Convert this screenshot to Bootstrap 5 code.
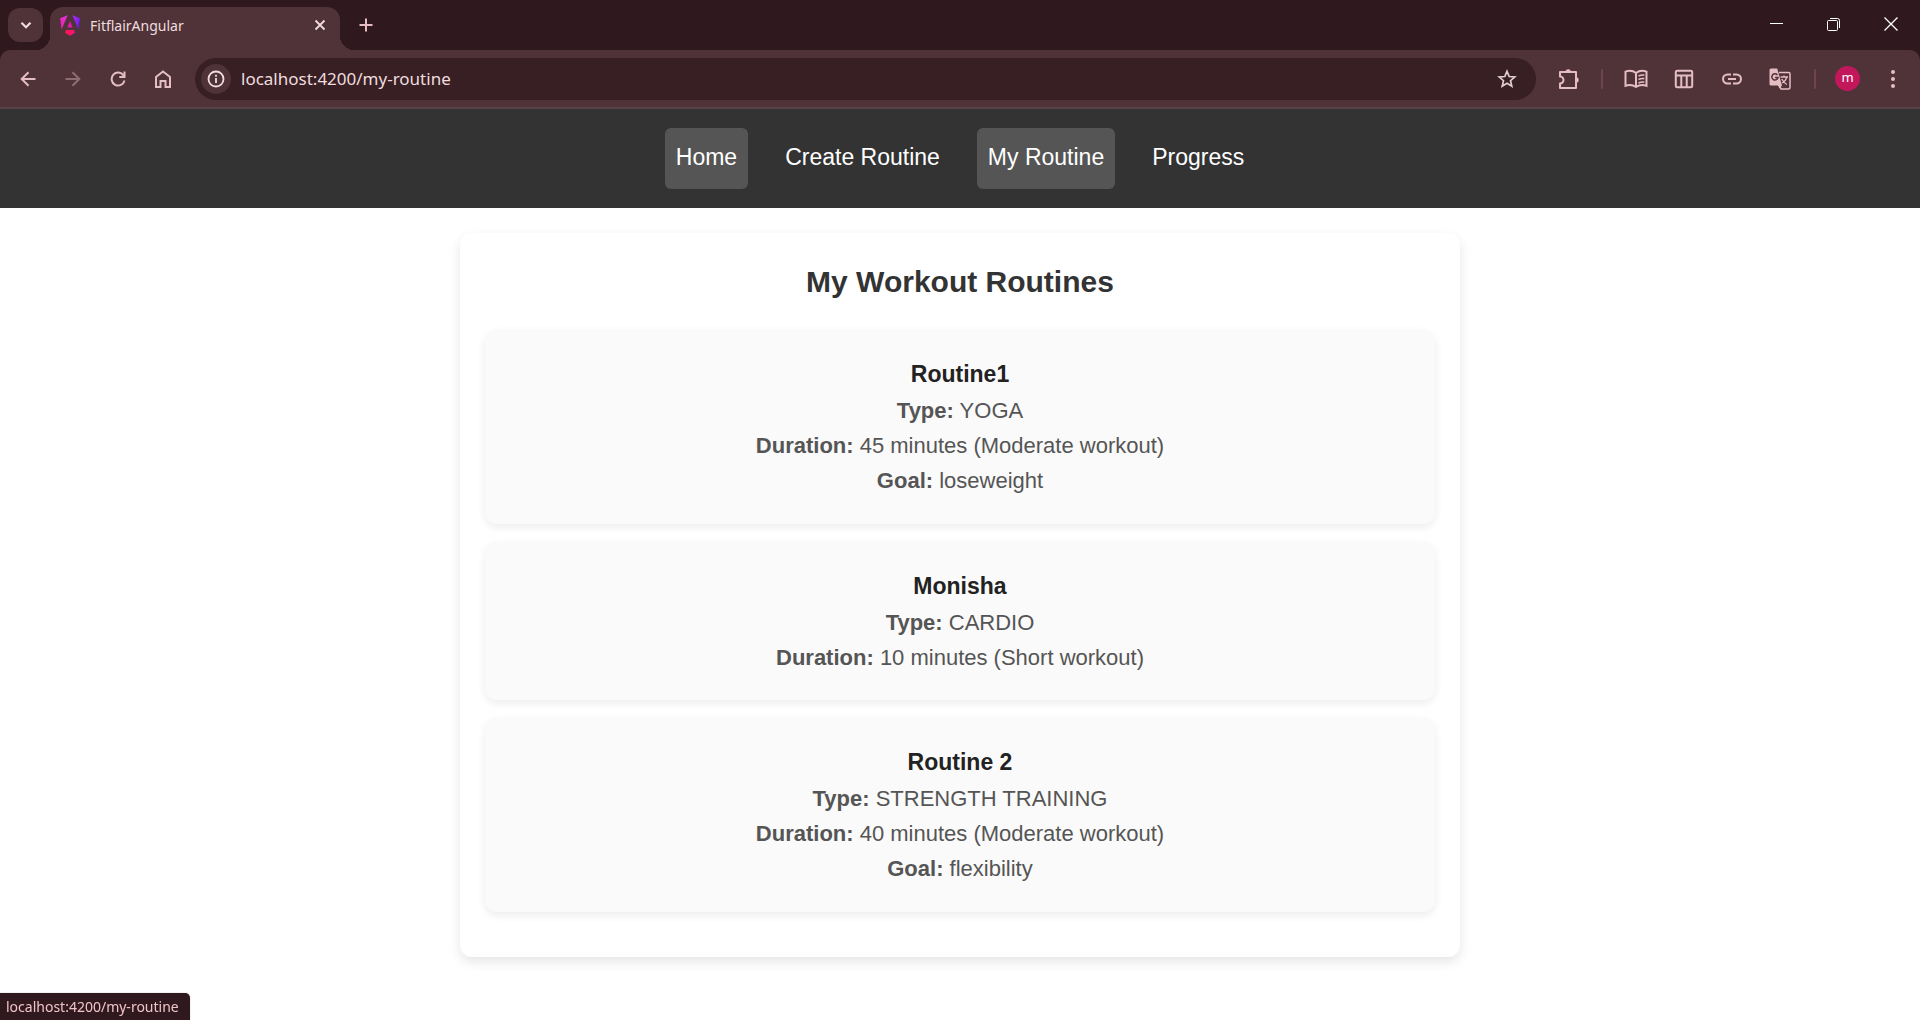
<!DOCTYPE html>
<html lang="en">
<head>
<meta charset="utf-8">
<meta name="viewport" content="width=device-width, initial-scale=1">
<title>FitflairAngular</title>
<link href="https://cdn.jsdelivr.net/npm/bootstrap@5.3.0/dist/css/bootstrap.min.css" rel="stylesheet">
<style>
  :root { --frame: #2f191e; --bar: #4f3338; --field: #371f23; --ink: #e5bdc3; --pale: #f0dcdf; }
  body { font-family: "Liberation Sans", Arial, sans-serif; background: #fff; color: #333; }
  svg { display: block; fill: none; stroke: currentColor; stroke-width: 2; }
  svg.solid { stroke: none; }
  .browser-ui { font-family: "Noto Sans", "Open Sans", sans-serif; }
  .tab-strip { background: var(--frame); height: 50px; padding: 0 1px 0 8px; }
  .plain-btn { border: 0; background: transparent; padding: 0; color: var(--ink); display: flex; align-items: center; justify-content: center; }
  .tab-search { width: 35px; height: 34px; border-radius: 12px; background: var(--bar); color: var(--pale); margin: 8px 7px 0 0; }
  .page-tab { position: relative; width: 290px; height: 43px; padding: 0 12px 7px 10px; gap: 10px; border-radius: 13px 13px 0 0; background: var(--bar); color: var(--pale); font-size: 14px; }
  .page-tab::before, .page-tab::after { content: ""; position: absolute; bottom: 0; width: 14px; height: 14px; }
  .page-tab::before { right: 100%; background: radial-gradient(circle at 0 0, transparent 14px, var(--bar) 14px); }
  .page-tab::after { left: 100%; background: radial-gradient(circle at 100% 0, transparent 14px, var(--bar) 14px); }
  .tab-close { width: 16px; height: 24px; color: var(--pale); }
  .new-tab { width: 36px; height: 34px; margin: 8px 0 0 8px; }
  .win-btn { width: 57px; height: 48px; color: #fff; }
  .win-btn svg { stroke-width: 1; }
  .tool-wrap { background: var(--frame); }
  .tool-bar { background: var(--bar); height: 57px; padding: 0 5px; border-radius: 10px 10px 0 0; }
  .tool-btn { width: 45px; height: 42px; }
  .ext-btn { width: 48px; height: 42px; }
  .forward { color: #8e6d72; }
  .omnibox { background: var(--field); height: 42px; border-radius: 21px; margin: 0 10px; padding: 0 19px 0 6px; }
  .site-info { width: 30px; height: 30px; border-radius: 50%; background: var(--bar); color: var(--pale); }
  .url-field { border: 0; outline: 0; background: transparent; color: var(--pale); font-size: 17px; padding: 0; margin-left: 10px; min-width: 0; }
  .divider-box { width: 21px; }
  .divider-box span { width: 2px; height: 20px; background: #6b474d; border-radius: 1px; }
  .avatar { width: 25px; height: 25px; border-radius: 50%; background: #c2185b; color: #fff; font-size: 13px; line-height: 23px; }
  .edge-line { height: 2px; background: #594245; }
  .site-nav { background: #333; padding: 19px 0; gap: 26px; }
  .site-link { color: #fff; text-decoration: none; font-size: 23px; line-height: 34px; padding: 12px 11px 15px; border-radius: 6px; }
  .site-link:hover { color: #fff; }
  .site-link.active, .site-link:hover { background: #555; }
  .routines { max-width: 1000px; margin: 25px auto; padding: 25px 25px 45px; border-radius: 12px; background: #fff; box-shadow: 0 5px 12px rgba(0,0,0,.1); }
  .routines h1 { font-size: 30px; line-height: 48px; font-weight: 700; margin: 0 0 24px; color: #333; }
  .routine-list { gap: 18px; }
  .routine { padding: 25px; border-radius: 12px; background: #fafafa; box-shadow: 0 3px 8px rgba(0,0,0,.08); color: #555; font-size: 22px; line-height: 1.6; }
  .routine h2 { font-size: 23px; line-height: 38px; font-weight: 700; margin: 0; color: #222; }
  .link-status { background: var(--frame); color: #efc3ca; font-size: 14px; line-height: 27px; padding: 0 11px 0 6px; border-radius: 0 5px 0 0; box-shadow: 0 0 1px #777; }
</style>
<script src="https://cdn.jsdelivr.net/npm/bootstrap@5.3.0/dist/js/bootstrap.bundle.min.js"></script>
</head>
<body>
<header class="browser-ui">
  <div class="tab-strip d-flex">
    <button class="plain-btn tab-search" aria-label="Search tabs"><svg width="12" height="12" viewBox="0 0 12 12"><path d="M1.5 3.8 6 8.2l4.500-4.400" stroke-width="2.200"/></svg></button>
    <div class="page-tab d-flex align-items-center align-self-end">
      <svg class="solid" width="20" height="21" viewBox="0 0 20 21">
        <defs>
          <linearGradient id="gl" x1="0" y1="1" x2="1" y2="0"><stop offset="0" stop-color="#f01ba0"/><stop offset="1" stop-color="#e335e8"/></linearGradient>
          <linearGradient id="gr" x1="0" y1="0" x2="1" y2="1"><stop offset="0" stop-color="#b22cf5"/><stop offset="1" stop-color="#5a18f0"/></linearGradient>
          <linearGradient id="gb" x1="0" y1="0" x2="1" y2="0"><stop offset="0" stop-color="#ff1744"/><stop offset="1" stop-color="#f5128a"/></linearGradient>
        </defs>
        <path fill="url(#gl)" d="M7.600.300 1.600 14.500.100 3.300z"/>
        <path fill="url(#gr)" d="M12.400.300 18.400 14.500 19.900 3.300z"/>
        <path fill="#e01ba8" d="M10 6 12.700 12.500H7.300z"/>
        <path fill="url(#gb)" d="M6 15h8l1 2.800L10 20.700l-5-2.900z"/>
      </svg>
      <span class="flex-grow-1">FitflairAngular</span>
      <button class="plain-btn tab-close" aria-label="Close tab"><svg width="12" height="12" viewBox="0 0 12 12"><path d="M1.500 1.500l9 9m0-9l-9 9" stroke-width="1.800"/></svg></button>
    </div>
    <button class="plain-btn new-tab" aria-label="New tab"><svg width="14" height="14" viewBox="0 0 14 14"><path d="M7 .5v13M.5 7h13"/></svg></button>
    <div class="d-flex ms-auto">
      <button class="plain-btn win-btn" aria-label="Minimize"><svg width="13" height="13" viewBox="0 0 13 13"><path d="M0 5.500h13"/></svg></button>
      <button class="plain-btn win-btn" aria-label="Restore"><svg width="13" height="13" viewBox="0 0 13 13"><rect x=".5" y="2.500" width="10" height="10" rx="1"/><path d="M3 .500h7.500a2 2 0 0 1 2 2V10"/></svg></button>
      <button class="plain-btn win-btn" aria-label="Close"><svg width="14" height="14" viewBox="0 0 14 14"><path d="M.5.500l13 13m0-13l-13 13" stroke-width="1.300"/></svg></button>
    </div>
  </div>
  <div class="tool-wrap">
    <div class="tool-bar d-flex align-items-center">
      <button class="plain-btn tool-btn" aria-label="Back"><svg width="16" height="16" viewBox="0 0 16 16"><path d="M15.500 8H2M8.500 1.200 1.700 8l6.800 6.800"/></svg></button>
      <button class="plain-btn tool-btn forward" aria-label="Forward"><svg width="16" height="16" viewBox="0 0 16 16"><path d="M.5 8H14M7.500 1.200 14.300 8l-6.800 6.800"/></svg></button>
      <button class="plain-btn tool-btn" aria-label="Reload"><svg width="16" height="16" viewBox="0 0 16 16"><path d="M13.600 4.500A6.500 6.500 0 1 0 14.500 9.500M14.500.500v5.500H9.300"/></svg></button>
      <button class="plain-btn tool-btn" aria-label="Home"><svg width="16" height="18" viewBox="0 0 16 18"><path d="M1 7 8 1.500 15 7v10h-4.500v-6h-5v6H1z"/></svg></button>
      <div class="omnibox d-flex align-items-center flex-grow-1">
        <button class="plain-btn site-info" aria-label="View site information"><svg width="18" height="18" viewBox="0 0 18 18"><circle cx="9" cy="9" r="7.500" stroke-width="1.800"/><path d="M9 8v5M9 4.700v2" stroke-width="1.800"/></svg></button>
        <input class="url-field flex-grow-1" type="text" value="localhost:4200/my-routine" aria-label="Address" spellcheck="false">
        <button class="plain-btn" aria-label="Bookmark this tab"><svg width="20" height="20" viewBox="0 0 20 20"><path d="M10 2.300 12.200 7.500 17.800 8 13.500 11.700 14.800 17.200 10 14.300 5.200 17.200 6.500 11.700 2.200 8 7.800 7.500z" stroke="#e2cdd0" stroke-width="1.700"/></svg></button>
      </div>
      <button class="plain-btn tool-btn" aria-label="Extensions"><svg width="22" height="22" viewBox="0 0 22 22"><path d="M2 4h16v16H2v-4.500a3.500 3.500 0 0 0 0-7z" stroke-linejoin="round"/><path fill="currentColor" stroke="none" d="M7.500 4a2.700 2.700 0 0 1 5.400 0zM18 9.300a2.700 2.700 0 0 1 0 5.400z"/></svg></button>
      <div class="divider-box d-flex justify-content-center"><span></span></div>
      <button class="plain-btn ext-btn" aria-label="Reading mode"><svg width="24" height="20" viewBox="0 0 24 20"><path d="M12 4C9 1.600 5 1.300 1.500 2.600v14.200c3.500-1.300 7.500-1 10.500 1.200 3-2.200 7-2.500 10.500-1.200V2.600C19 1.300 15 1.600 12 4zM12 4v14"/><path d="M14.500 7c1.800-.9 3.700-1.200 5.800-.9M14.500 10.500c1.800-.9 3.700-1.200 5.800-.9M14.500 14c1.800-.9 3.700-1.200 5.800-.9" stroke-width="1.600"/></svg></button>
      <button class="plain-btn ext-btn" aria-label="Side panel"><svg width="20" height="20" viewBox="0 0 20 20"><rect x="1.800" y="1.800" width="16.400" height="16.400" rx="1.500"/><path d="M2 6.500h16M7.300 6.500V18M12.700 6.500V18"/></svg></button>
      <button class="plain-btn ext-btn" aria-label="Copy link"><svg width="20" height="12" viewBox="0 0 20 12"><path d="M9 1.500H5.500a4.500 4.500 0 0 0 0 9H9M11 1.500h3.500a4.500 4.500 0 0 1 0 9H11M6 6h8"/></svg></button>
      <button class="plain-btn ext-btn" aria-label="Translate"><svg width="22" height="22" viewBox="0 0 22 22"><path d="M10 4.500h9.500a1.500 1.500 0 0 1 1.500 1.500v13.500a1.500 1.500 0 0 1-1.500 1.500H12l-2-4.500" stroke-width="1.500"/><path fill="currentColor" stroke="none" d="M2 .500h6.200L13 17.500l-2.500 3L9 17.500H2a1.500 1.500 0 0 1-1.500-1.500V2A1.500 1.500 0 0 1 2 .500z"/><path d="M8.400 7A3.100 3.100 0 1 0 9 9.500H6" stroke="#4f3338" stroke-width="1.500"/><path d="M11.500 9h7.500M15 7.500V9M18 9c-.8 2.800-2.500 4.500-4.800 6M12.800 11c1 2.200 3 4.200 5 5.500" stroke-width="1.300"/></svg></button>
      <div class="divider-box d-flex justify-content-center"><span></span></div>
      <button class="plain-btn tool-btn" aria-label="Profile"><span class="avatar">m</span></button>
      <button class="plain-btn tool-btn" aria-label="Menu"><svg class="solid" width="4" height="18" viewBox="0 0 4 18"><g fill="currentColor"><circle cx="2" cy="2" r="2"/><circle cx="2" cy="9" r="2"/><circle cx="2" cy="16" r="2"/></g></svg></button>
    </div>
    <div class="edge-line"></div>
  </div>
</header>

<nav class="site-nav d-flex flex-wrap justify-content-center">
  <a class="site-link active" href="#">Home</a>
  <a class="site-link" href="#">Create Routine</a>
  <a class="site-link active" href="#" aria-current="page">My Routine</a>
  <a class="site-link" href="#">Progress</a>
</nav>

<main class="routines text-center">
  <h1>My Workout Routines</h1>
  <div class="routine-list d-flex flex-column">
    <article class="routine">
      <h2>Routine1</h2>
      <p class="mb-0"><strong>Type:</strong> YOGA</p>
      <p class="mb-0"><strong>Duration:</strong> 45 minutes (Moderate workout)</p>
      <p class="mb-0"><strong>Goal:</strong> loseweight</p>
    </article>
    <article class="routine">
      <h2>Monisha</h2>
      <p class="mb-0"><strong>Type:</strong> CARDIO</p>
      <p class="mb-0"><strong>Duration:</strong> 10 minutes (Short workout)</p>
    </article>
    <article class="routine">
      <h2>Routine 2</h2>
      <p class="mb-0"><strong>Type:</strong> STRENGTH TRAINING</p>
      <p class="mb-0"><strong>Duration:</strong> 40 minutes (Moderate workout)</p>
      <p class="mb-0"><strong>Goal:</strong> flexibility</p>
    </article>
  </div>
</main>

<div class="browser-ui link-status position-fixed bottom-0 start-0">localhost:4200/my-routine</div>
</body>
</html>
